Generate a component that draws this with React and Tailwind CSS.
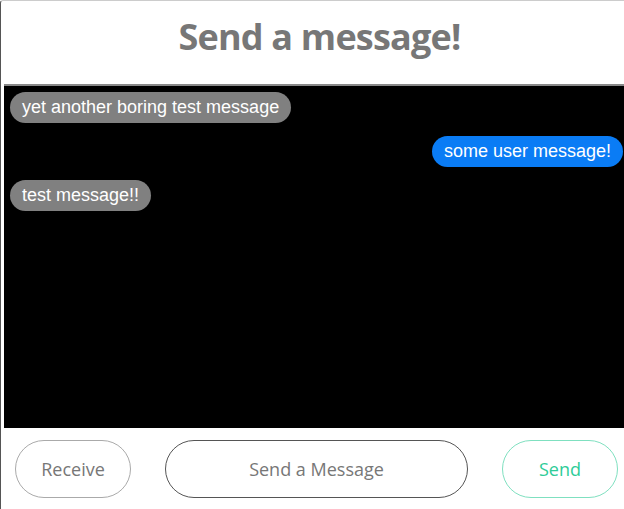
import React from 'react';

const messages = [
    { id: 1, text: 'yet another boring test message', mine: false },
    { id: 2, text: 'some user message!', mine: true },
    { id: 3, text: 'test message!!', mine: false },
];

const App = () => {
    return (
        <div className="w-[640px] h-[509px] bg-white border-l border-t border-l-[#555] border-t-[#ccc] rounded-tl-[3px] flex flex-col overflow-hidden">
            <div className="h-[83px] shrink-0 flex items-start justify-center pt-[9px] pr-[2px]">
                <h1 className="text-[36px] font-bold text-[#777] tracking-[-0.8px]" style={{ fontFamily: '"Open Sans", sans-serif' }}>
                    Send a message!
                </h1>
            </div>

            <div className="ml-[3px] h-[344px] shrink-0 bg-black border-t-2 border-[#888] pt-[6px] pl-[6px] pr-[17px] flex flex-col gap-[13px]" style={{ fontFamily: '"Liberation Sans", Arial, sans-serif' }}>
                {messages.map(m => (
                    <div key={m.id} className={`flex ${m.mine ? 'justify-end' : 'justify-start'}`}>
                        <span className={`h-[31px] pl-[12px] pr-[12px] rounded-full text-[18px] leading-[31px] text-white ${m.mine ? 'bg-[#0a7cf5]' : 'bg-[#808080]'}`}>
                            {m.text}
                        </span>
                    </div>
                ))}
            </div>

            <div className="flex items-center pl-[14px] pt-[12px] gap-[34px]" style={{ fontFamily: '"Open Sans", sans-serif' }}>
                <button className="w-[116px] h-[58px] rounded-full border border-[#aaa] text-[18px] text-[#777] bg-white">
                    Receive
                </button>
                <input
                    className="w-[303px] h-[58px] rounded-full border border-[#555] text-[18px] text-center text-[#777] placeholder-[#777] outline-none"
                    placeholder="Send a Message"
                />
                <button className="w-[116px] h-[58px] rounded-full border border-[#7fe0c0] text-[18px] text-[#2ecc98] bg-white">
                    Send
                </button>
            </div>
        </div>
    );
};

export default App;
